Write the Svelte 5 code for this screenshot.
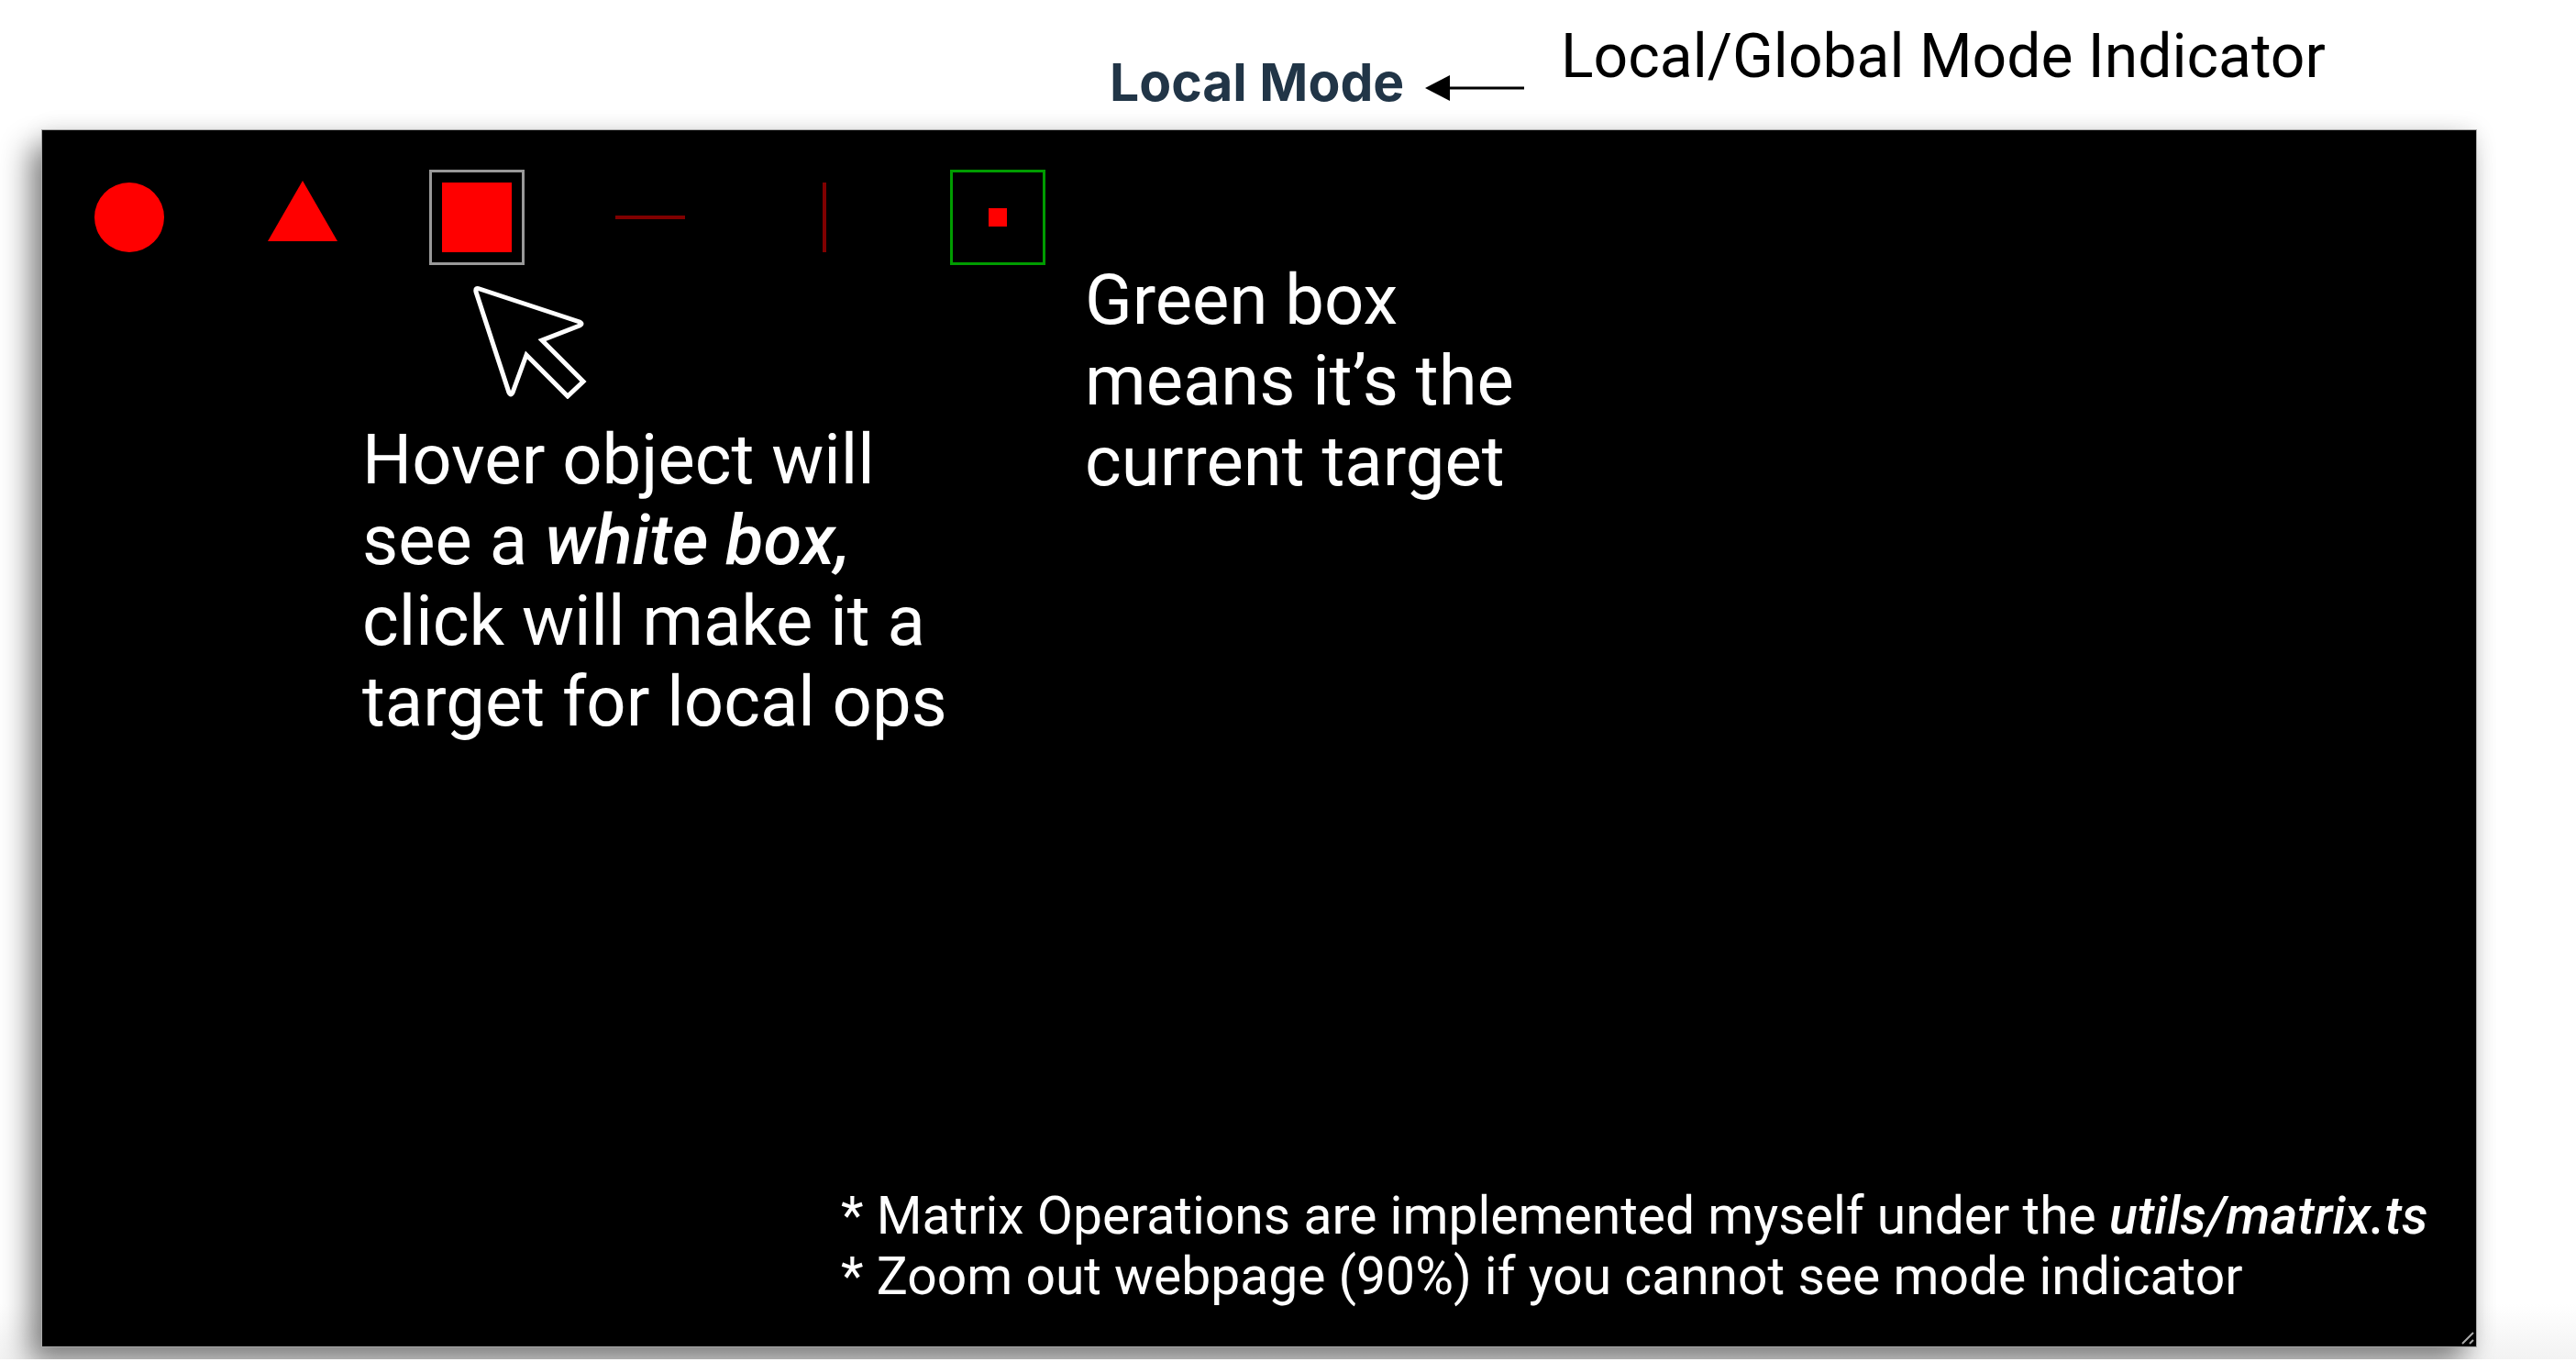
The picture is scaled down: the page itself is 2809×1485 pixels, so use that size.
<script>
  const shapes = ['circle', 'triangle', 'square', 'hline', 'vline', 'point'];
  const labels = {
    circle: 'Circle',
    triangle: 'Triangle',
    square: 'Square',
    hline: 'Horizontal line',
    vline: 'Vertical line',
    point: 'Point',
  };
  let hovered = $state('square');
  let target = $state('point');
</script>

<main class="page">
  <header class="top">
    <h1 class="mode">Local Mode</h1>
    <svg class="arrow" viewBox="0 0 108 28" aria-hidden="true">
      <path d="M0 14 27 0V28Z" fill="#000" />
      <path d="M26 14H108" stroke="#000" stroke-width="3" />
    </svg>
    <p class="caption">Local/Global Mode Indicator</p>
  </header>

  <section class="canvas">
    <div class="shapes">
      {#each shapes as shape}
        <button
          class="cell"
          class:hovered={hovered === shape}
          class:target={target === shape}
          aria-label={labels[shape]}
          onclick={() => (target = shape)}
          onmouseenter={() => (hovered = shape)}
        >
          <svg viewBox="0 0 76 76" aria-hidden="true">
            {#if shape === 'circle'}
              <circle cx="38" cy="38" r="38" fill="#f00" />
            {:else if shape === 'triangle'}
              <path d="M38-2 76 64H0Z" fill="#f00" />
            {:else if shape === 'square'}
              <path d="M0 0H76V76H0Z" fill="#f00" />
            {:else if shape === 'hline'}
              <path d="M0 38H76" stroke="#800000" stroke-width="4" />
            {:else if shape === 'vline'}
              <path d="M38 0V76" stroke="#800000" stroke-width="4" />
            {:else}
              <path d="M28 28H48V48H28Z" fill="#f00" />
            {/if}
          </svg>
        </button>
      {/each}
    </div>

    <div class="notes">
      <div class="hover-note">
        <svg class="cursor" viewBox="0 0 124 124" aria-hidden="true">
          <path
            d="M3 7Q2 2 7 4L116 40Q120 42 116 44L75 60 120 105 103 121 58 76 43 117Q41 121 39 117Z"
            fill="none"
            stroke="#fff"
            stroke-width="5"
          />
        </svg>
        <p class="note">
          Hover object will<br />see a <em>white box,</em><br />click will make it a<br />target for local ops
        </p>
      </div>
      <p class="note">Green box<br />means it’s the<br />current target</p>
    </div>

    <footer class="remarks">
      <p>* Matrix Operations are implemented myself under the <em>utils/matrix.ts</em></p>
      <p>* Zoom out webpage (90%) if you cannot see mode indicator</p>
    </footer>

    <svg class="grip" viewBox="0 0 14 14" aria-hidden="true">
      <path d="M1 13 13 1M9 13 13 9" stroke="#aaa" stroke-width="2" />
    </svg>
  </section>
</main>

<style>
  :global(body) {
    margin: 0;
    background: #fff;
  }
  .page {
    box-sizing: border-box;
    display: flex;
    flex-direction: column;
    height: 100vh;
    padding: 0 109px 14px 46px;
    overflow: hidden;
    background: linear-gradient(#fff calc(100% - 60px), #f2f2f2);
    border-bottom: 3px solid #fff;
    font-family: Roboto, "Liberation Sans", sans-serif;
  }
  h1,
  p {
    margin: 0;
  }
  .top {
    display: flex;
    flex: none;
    align-items: flex-start;
    height: 142px;
    padding-left: 1164px;
    white-space: nowrap;
  }
  .mode {
    width: 344px;
    padding-top: 54px;
    color: #213547;
    font: 700 57px/72px Inter, sans-serif;
  }
  .arrow {
    flex: none;
    width: 108px;
    height: 28px;
    margin-top: 82px;
  }
  .caption {
    padding: 24px 0 0 40px;
    font-size: 66px;
    line-height: 76px;
  }
  .canvas {
    position: relative;
    display: flex;
    flex: 1;
    flex-direction: column;
    background: #000;
    color: #fff;
    box-shadow:
      0 0 0 1px #aaa,
      -14px 18px 30px rgba(0, 0, 0, 0.46),
      0 0 24px rgba(0, 0, 0, 0.1);
  }
  .shapes {
    display: grid;
    grid-template-columns: repeat(6, 1fr);
    width: 1137px;
    padding-top: 43px;
    justify-items: center;
  }
  .cell {
    display: grid;
    place-items: center;
    box-sizing: border-box;
    width: 104px;
    height: 104px;
    padding: 0;
    border: 3px solid transparent;
    background: none;
  }
  .cell svg {
    width: 76px;
    height: 76px;
    overflow: visible;
  }
  .hovered {
    border-color: #999;
  }
  .target {
    border-color: #009c00;
  }
  .notes {
    display: flex;
    flex: 1;
    gap: 98px;
    margin-top: -6px;
    padding-left: 349px;
  }
  .hover-note {
    width: 690px;
    padding-top: 28px;
  }
  .cursor {
    display: block;
    width: 124px;
    height: 124px;
    margin: 0 0 22px 121px;
  }
  .note {
    font-size: 76px;
    line-height: 88px;
    white-space: nowrap;
  }
  em {
    font-weight: 500;
  }
  .remarks {
    align-self: flex-end;
    width: 1783px;
    padding-bottom: 43px;
    font-size: 57px;
    line-height: 66px;
    white-space: nowrap;
  }
  .grip {
    position: absolute;
    right: 2px;
    bottom: 2px;
    width: 14px;
    height: 14px;
  }
</style>
